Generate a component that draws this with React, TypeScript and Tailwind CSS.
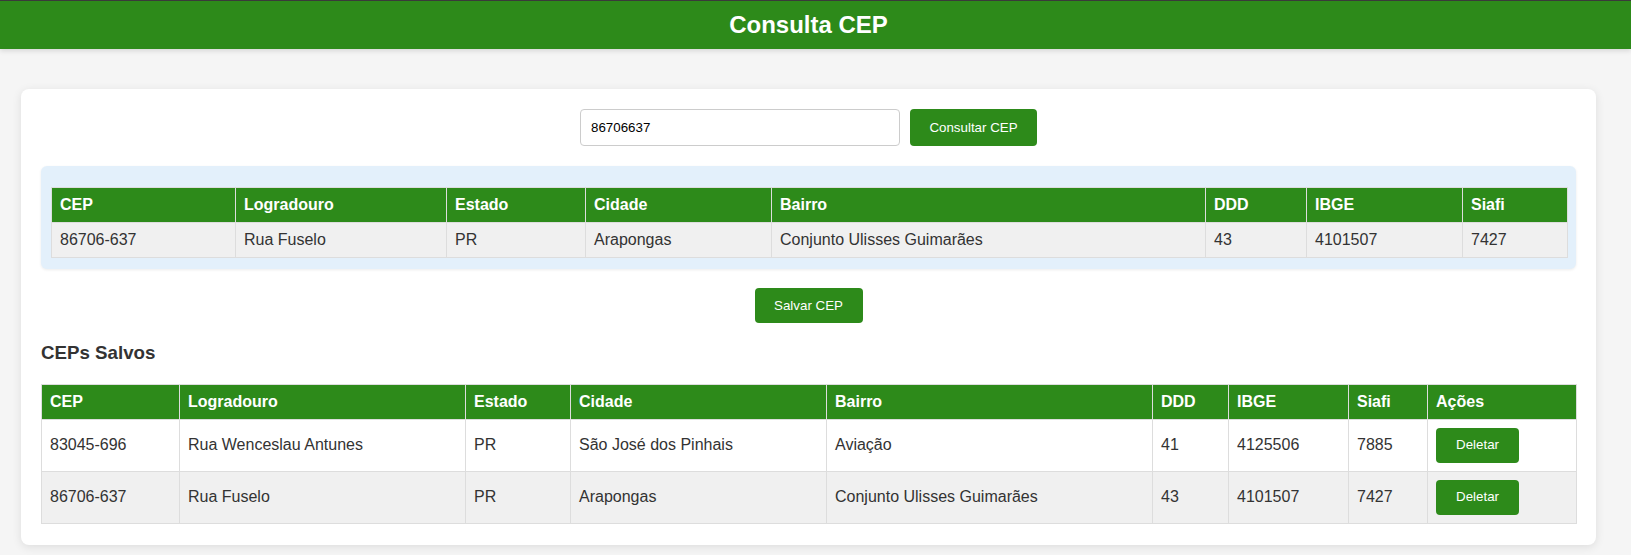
const resultado = {
  cep: "86706-637",
  logradouro: "Rua Fuselo",
  estado: "PR",
  cidade: "Arapongas",
  bairro: "Conjunto Ulisses Guimarães",
  ddd: "43",
  ibge: "4101507",
  siafi: "7427",
};

const salvos = [
  {
    cep: "83045-696",
    logradouro: "Rua Wenceslau Antunes",
    estado: "PR",
    cidade: "São José dos Pinhais",
    bairro: "Aviação",
    ddd: "41",
    ibge: "4125506",
    siafi: "7885",
  },
  resultado,
];

const colsResultado = ["184px", "211px", "139px", "186px", "434px", "101px", "156px", "105px"];
const colsSalvos = ["138px", "286px", "105px", "256px", "326px", "76px", "120px", "79px", "149px"];

const th = "border border-[#ddd] px-2 py-2 text-left font-bold text-white leading-[18px]";
const td = "border border-[#ddd] px-2 py-2 leading-[18px]";

const App = () => {
  return (
    <div className="min-h-screen bg-[#f5f5f5] font-['Liberation_Sans',Arial,sans-serif] text-[16px] text-[#333]">
      <header className="h-[49px] bg-[#2d8a1a] border-t border-[#3a3a3a] flex items-center justify-center pr-[14px] shadow-[0_2px_5px_rgba(0,0,0,0.12)]">
        <h1 className="text-[24px] font-bold text-white">Consulta CEP</h1>
      </header>

      <div className="pt-10 pl-[21px]">
        <div className="w-[1575px] bg-white rounded-lg p-5 pb-[21px] shadow-[0_2px_10px_rgba(0,0,0,0.1)]">
          {/* busca */}
          <div className="flex justify-center gap-[10px]">
            <input
              defaultValue="86706637"
              className="w-[320px] h-[37px] border border-[#ccc] rounded px-[10px] text-[13.33px] text-black outline-none"
            />
            <button className="w-[127px] h-[37px] bg-[#2d8a1a] text-white text-[13.33px] rounded">
              Consultar CEP
            </button>
          </div>

          {/* resultado da consulta */}
          <div className="mt-5 bg-[#e3f0fb] rounded-md pt-[21px] px-[10px] pb-[11px] shadow-[0_1px_3px_rgba(0,0,0,0.08)]">
            <table className="w-full table-fixed border-collapse">
              <colgroup>
                {colsResultado.map((w, i) => (
                  <col key={i} style={{ width: w }} />
                ))}
              </colgroup>
              <thead>
                <tr className="bg-[#2d8a1a]">
                  {["CEP", "Logradouro", "Estado", "Cidade", "Bairro", "DDD", "IBGE", "Siafi"].map((h) => (
                    <th key={h} className={th}>{h}</th>
                  ))}
                </tr>
              </thead>
              <tbody>
                <tr className="bg-[#f0f0f0]">
                  <td className={td}>{resultado.cep}</td>
                  <td className={td}>{resultado.logradouro}</td>
                  <td className={td}>{resultado.estado}</td>
                  <td className={td}>{resultado.cidade}</td>
                  <td className={td}>{resultado.bairro}</td>
                  <td className={td}>{resultado.ddd}</td>
                  <td className={td}>{resultado.ibge}</td>
                  <td className={td}>{resultado.siafi}</td>
                </tr>
              </tbody>
            </table>
          </div>

          <div className="flex justify-center mt-[19px]">
            <button className="h-[35px] w-[108px] bg-[#2d8a1a] text-white text-[13.33px] rounded">
              Salvar CEP
            </button>
          </div>

          <h3 className="mt-[19px] mb-[20px] text-[18.72px] font-bold leading-[21.5px] text-[#333]">CEPs Salvos</h3>

          {/* lista de salvos */}
          <table className="w-full table-fixed border-collapse">
            <colgroup>
              {colsSalvos.map((w, i) => (
                <col key={i} style={{ width: w }} />
              ))}
            </colgroup>
            <thead>
              <tr className="bg-[#2d8a1a]">
                {["CEP", "Logradouro", "Estado", "Cidade", "Bairro", "DDD", "IBGE", "Siafi", "Ações"].map((h) => (
                  <th key={h} className={th}>{h}</th>
                ))}
              </tr>
            </thead>
            <tbody>
              {salvos.map((c, i) => (
                <tr key={c.cep} className={i % 2 === 1 ? "bg-[#f0f0f0]" : "bg-white"}>
                  <td className={td}>{c.cep}</td>
                  <td className={td}>{c.logradouro}</td>
                  <td className={td}>{c.estado}</td>
                  <td className={td}>{c.cidade}</td>
                  <td className={td}>{c.bairro}</td>
                  <td className={td}>{c.ddd}</td>
                  <td className={td}>{c.ibge}</td>
                  <td className={td}>{c.siafi}</td>
                  <td className={td}>
                    <button className="h-[35px] w-[83px] bg-[#2d8a1a] text-white text-[13.33px] rounded block">
                      Deletar
                    </button>
                  </td>
                </tr>
              ))}
            </tbody>
          </table>
        </div>
      </div>
    </div>
  );
};

export default App;
